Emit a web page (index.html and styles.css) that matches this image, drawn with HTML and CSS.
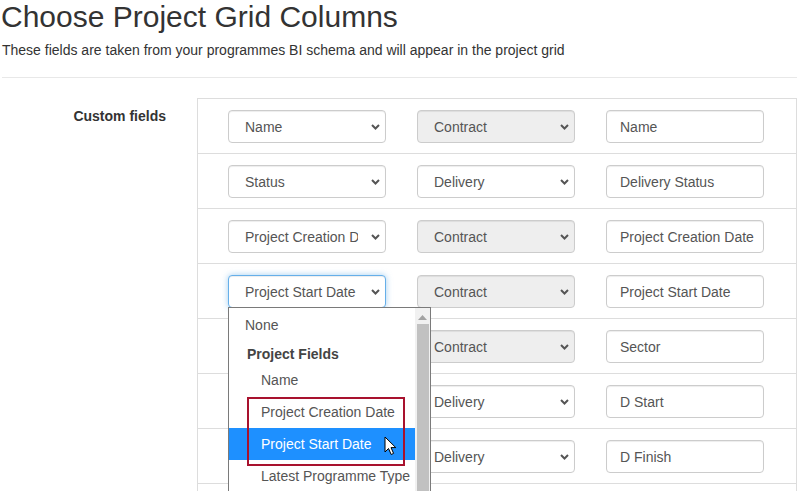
FILE: index.html
```html
<!DOCTYPE html>
<html lang="en">
<head>
<meta charset="utf-8">
<title>Choose Project Grid Columns</title>
<link rel="stylesheet" href="styles.css">
</head>
<body>
<div class="page">
  <h1 class="title">Choose Project Grid Columns</h1>
  <p class="lead">These fields are taken from your programmes BI schema and will appear in the project grid</p>
  <hr class="rule">
  <div class="form-row">
    <div class="label">Custom fields</div>
    <div class="grid">
      <div class="row">
        <div class="sel"><span class="val">Name</span><svg class="chev" width="9" height="6" viewBox="0 0 9 6"><polyline points="1,1 4.5,4.5 8,1" fill="none" stroke="#555" stroke-width="2"/></svg></div>
        <div class="sel disabled"><span class="val">Contract</span><svg class="chev" width="9" height="6" viewBox="0 0 9 6"><polyline points="1,1 4.5,4.5 8,1" fill="none" stroke="#555" stroke-width="2"/></svg></div>
        <div class="inp">Name</div>
      </div>
      <div class="row">
        <div class="sel"><span class="val">Status</span><svg class="chev" width="9" height="6" viewBox="0 0 9 6"><polyline points="1,1 4.5,4.5 8,1" fill="none" stroke="#555" stroke-width="2"/></svg></div>
        <div class="sel"><span class="val">Delivery</span><svg class="chev" width="9" height="6" viewBox="0 0 9 6"><polyline points="1,1 4.5,4.5 8,1" fill="none" stroke="#555" stroke-width="2"/></svg></div>
        <div class="inp">Delivery Status</div>
      </div>
      <div class="row">
        <div class="sel"><span class="val">Project Creation Date</span><svg class="chev" width="9" height="6" viewBox="0 0 9 6"><polyline points="1,1 4.5,4.5 8,1" fill="none" stroke="#555" stroke-width="2"/></svg></div>
        <div class="sel disabled"><span class="val">Contract</span><svg class="chev" width="9" height="6" viewBox="0 0 9 6"><polyline points="1,1 4.5,4.5 8,1" fill="none" stroke="#555" stroke-width="2"/></svg></div>
        <div class="inp">Project Creation Date</div>
      </div>
      <div class="row">
        <div class="sel-wrap">
          <div class="sel focus"><span class="val">Project Start Date</span><svg class="chev" width="9" height="6" viewBox="0 0 9 6"><polyline points="1,1 4.5,4.5 8,1" fill="none" stroke="#555" stroke-width="2"/></svg></div>
          <div class="popup">
            <div class="opts">
              <div class="opt opt-none">None</div>
              <div class="grp">Project Fields</div>
              <div class="opt sub first">Name</div>
              <div class="opt sub">Project Creation Date</div>
              <div class="opt sub active">Project Start Date</div>
              <div class="opt sub">Latest Programme Type</div>
              <div class="opt sub">Sector</div>
            </div>
            <div class="scroll">
              <svg class="up" width="9" height="5" viewBox="0 0 9 5"><polygon points="0,5 4.5,0 9,5" fill="#a3a3a3"/></svg>
              <div class="thumb"></div>
            </div>
            <div class="mark"></div>
            <svg class="cursor" width="13" height="20" viewBox="0 0 13 20"><path d="M1 1 L1 16 L4.5 12.5 L7.2 18.5 L9.6 17.4 L7 11.6 L11.8 11.6 Z" fill="#fff" stroke="#000" stroke-width="1" stroke-linejoin="round"/></svg>
          </div>
        </div>
        <div class="sel disabled"><span class="val">Contract</span><svg class="chev" width="9" height="6" viewBox="0 0 9 6"><polyline points="1,1 4.5,4.5 8,1" fill="none" stroke="#555" stroke-width="2"/></svg></div>
        <div class="inp">Project Start Date</div>
      </div>
      <div class="row">
        <div class="sel"><span class="val">Sector</span><svg class="chev" width="9" height="6" viewBox="0 0 9 6"><polyline points="1,1 4.5,4.5 8,1" fill="none" stroke="#555" stroke-width="2"/></svg></div>
        <div class="sel disabled"><span class="val">Contract</span><svg class="chev" width="9" height="6" viewBox="0 0 9 6"><polyline points="1,1 4.5,4.5 8,1" fill="none" stroke="#555" stroke-width="2"/></svg></div>
        <div class="inp">Sector</div>
      </div>
      <div class="row">
        <div class="sel"><span class="val">Start Date</span><svg class="chev" width="9" height="6" viewBox="0 0 9 6"><polyline points="1,1 4.5,4.5 8,1" fill="none" stroke="#555" stroke-width="2"/></svg></div>
        <div class="sel"><span class="val">Delivery</span><svg class="chev" width="9" height="6" viewBox="0 0 9 6"><polyline points="1,1 4.5,4.5 8,1" fill="none" stroke="#555" stroke-width="2"/></svg></div>
        <div class="inp">D Start</div>
      </div>
      <div class="row">
        <div class="sel"><span class="val">Finish Date</span><svg class="chev" width="9" height="6" viewBox="0 0 9 6"><polyline points="1,1 4.5,4.5 8,1" fill="none" stroke="#555" stroke-width="2"/></svg></div>
        <div class="sel"><span class="val">Delivery</span><svg class="chev" width="9" height="6" viewBox="0 0 9 6"><polyline points="1,1 4.5,4.5 8,1" fill="none" stroke="#555" stroke-width="2"/></svg></div>
        <div class="inp">D Finish</div>
      </div>
      <div class="row">
        <div class="sel"><span class="val">None</span><svg class="chev" width="9" height="6" viewBox="0 0 9 6"><polyline points="1,1 4.5,4.5 8,1" fill="none" stroke="#555" stroke-width="2"/></svg></div>
        <div class="sel"><span class="val">Delivery</span><svg class="chev" width="9" height="6" viewBox="0 0 9 6"><polyline points="1,1 4.5,4.5 8,1" fill="none" stroke="#555" stroke-width="2"/></svg></div>
        <div class="inp"></div>
      </div>
    </div>
  </div>
</div>
</body>
</html>
```

FILE: styles.css
```css
html, body {
  margin: 0;
  padding: 0;
  overflow: hidden;
  background: #fff;
}
body {
  font-family: "Liberation Sans", Arial, sans-serif;
  color: #333;
}
.page {
  padding-left: 2px;
}
.title {
  margin: 0;
  font-size: 30px;
  font-weight: normal;
  line-height: 33px;
  color: #333;
  margin-left: -1px;
}
.lead {
  margin: 7px 0 0;
  font-size: 14px;
  line-height: 20px;
  color: #333;
}
.rule {
  margin: 17px 0 0;
  border: 0;
  border-top: 1px solid #e8e8e8;
  height: 0;
}
.form-row {
  display: flex;
  margin-top: 20px;
}
.label {
  width: 164px;
  text-align: right;
  font-size: 14px;
  font-weight: bold;
  line-height: 20px;
  padding-top: 8px;
  color: #333;
}
.grid {
  margin-left: 31px;
  flex: 1;
  border: 1px solid #ddd;
  border-bottom: 0;
}
.row {
  display: grid;
  grid-template-columns: 158px 158px 158px;
  column-gap: 31px;
  padding: 11px 0 10px 30px;
  border-bottom: 1px solid #ddd;
}
.sel, .inp {
  box-sizing: border-box;
  height: 33px;
  border: 1px solid #ccc;
  border-radius: 4px;
  background: #fff;
  font-size: 14px;
  color: #555;
  box-shadow: inset 0 1px 1px rgba(0,0,0,0.075);
  display: flex;
  align-items: center;
  white-space: nowrap;
}
.sel {
  padding-left: 16px;
  padding-right: 5px;
}
.val {
  flex: 1;
  overflow: hidden;
  margin-right: 13px;
}
.chev {
  flex: none;
  margin-top: 1px;
}
.sel.disabled {
  background: #eee;
}
.sel.focus {
  border-color: #66afe9;
  box-shadow: inset 0 1px 1px rgba(0,0,0,0.075), 0 0 6px rgba(102,175,233,0.6);
}
.inp {
  padding-left: 13px;
}
.sel-wrap {
  position: relative;
}
.popup {
  position: absolute;
  z-index: 10;
  top: 32px;
  left: 0;
  width: 203px;
  height: 200px;
  box-sizing: border-box;
  border: 1px solid #7a7a7a;
  background: #fff;
  display: flex;
  overflow: hidden;
}
.opts {
  flex: 1;
  font-size: 14px;
  color: #555;
}
.opt {
  height: 32px;
  line-height: 32px;
  white-space: nowrap;
}
.opt-none {
  height: 35px;
  line-height: 35px;
  padding-left: 16px;
}
.grp {
  height: 22px;
  line-height: 22px;
  padding-left: 18px;
  font-weight: bold;
  color: #444;
}
.sub {
  padding-left: 32px;
}
.sub.first {
  height: 31px;
  line-height: 31px;
}
.opt.active {
  background: #1e90ff;
  color: #fff;
}
.scroll {
  width: 15px;
  flex: none;
  background: #f1f1f1;
  display: flex;
  flex-direction: column;
  align-items: center;
}
.up {
  margin-top: 7px;
}
.thumb {
  margin-top: 4px;
  width: 12px;
  flex: 1;
  background: #c1c1c1;
}
.mark {
  position: absolute;
  left: 18px;
  top: 89px;
  width: 158px;
  height: 69px;
  box-sizing: border-box;
  border: 2px solid #a8122e;
}
.cursor {
  position: absolute;
  left: 155px;
  top: 128px;
}
```
